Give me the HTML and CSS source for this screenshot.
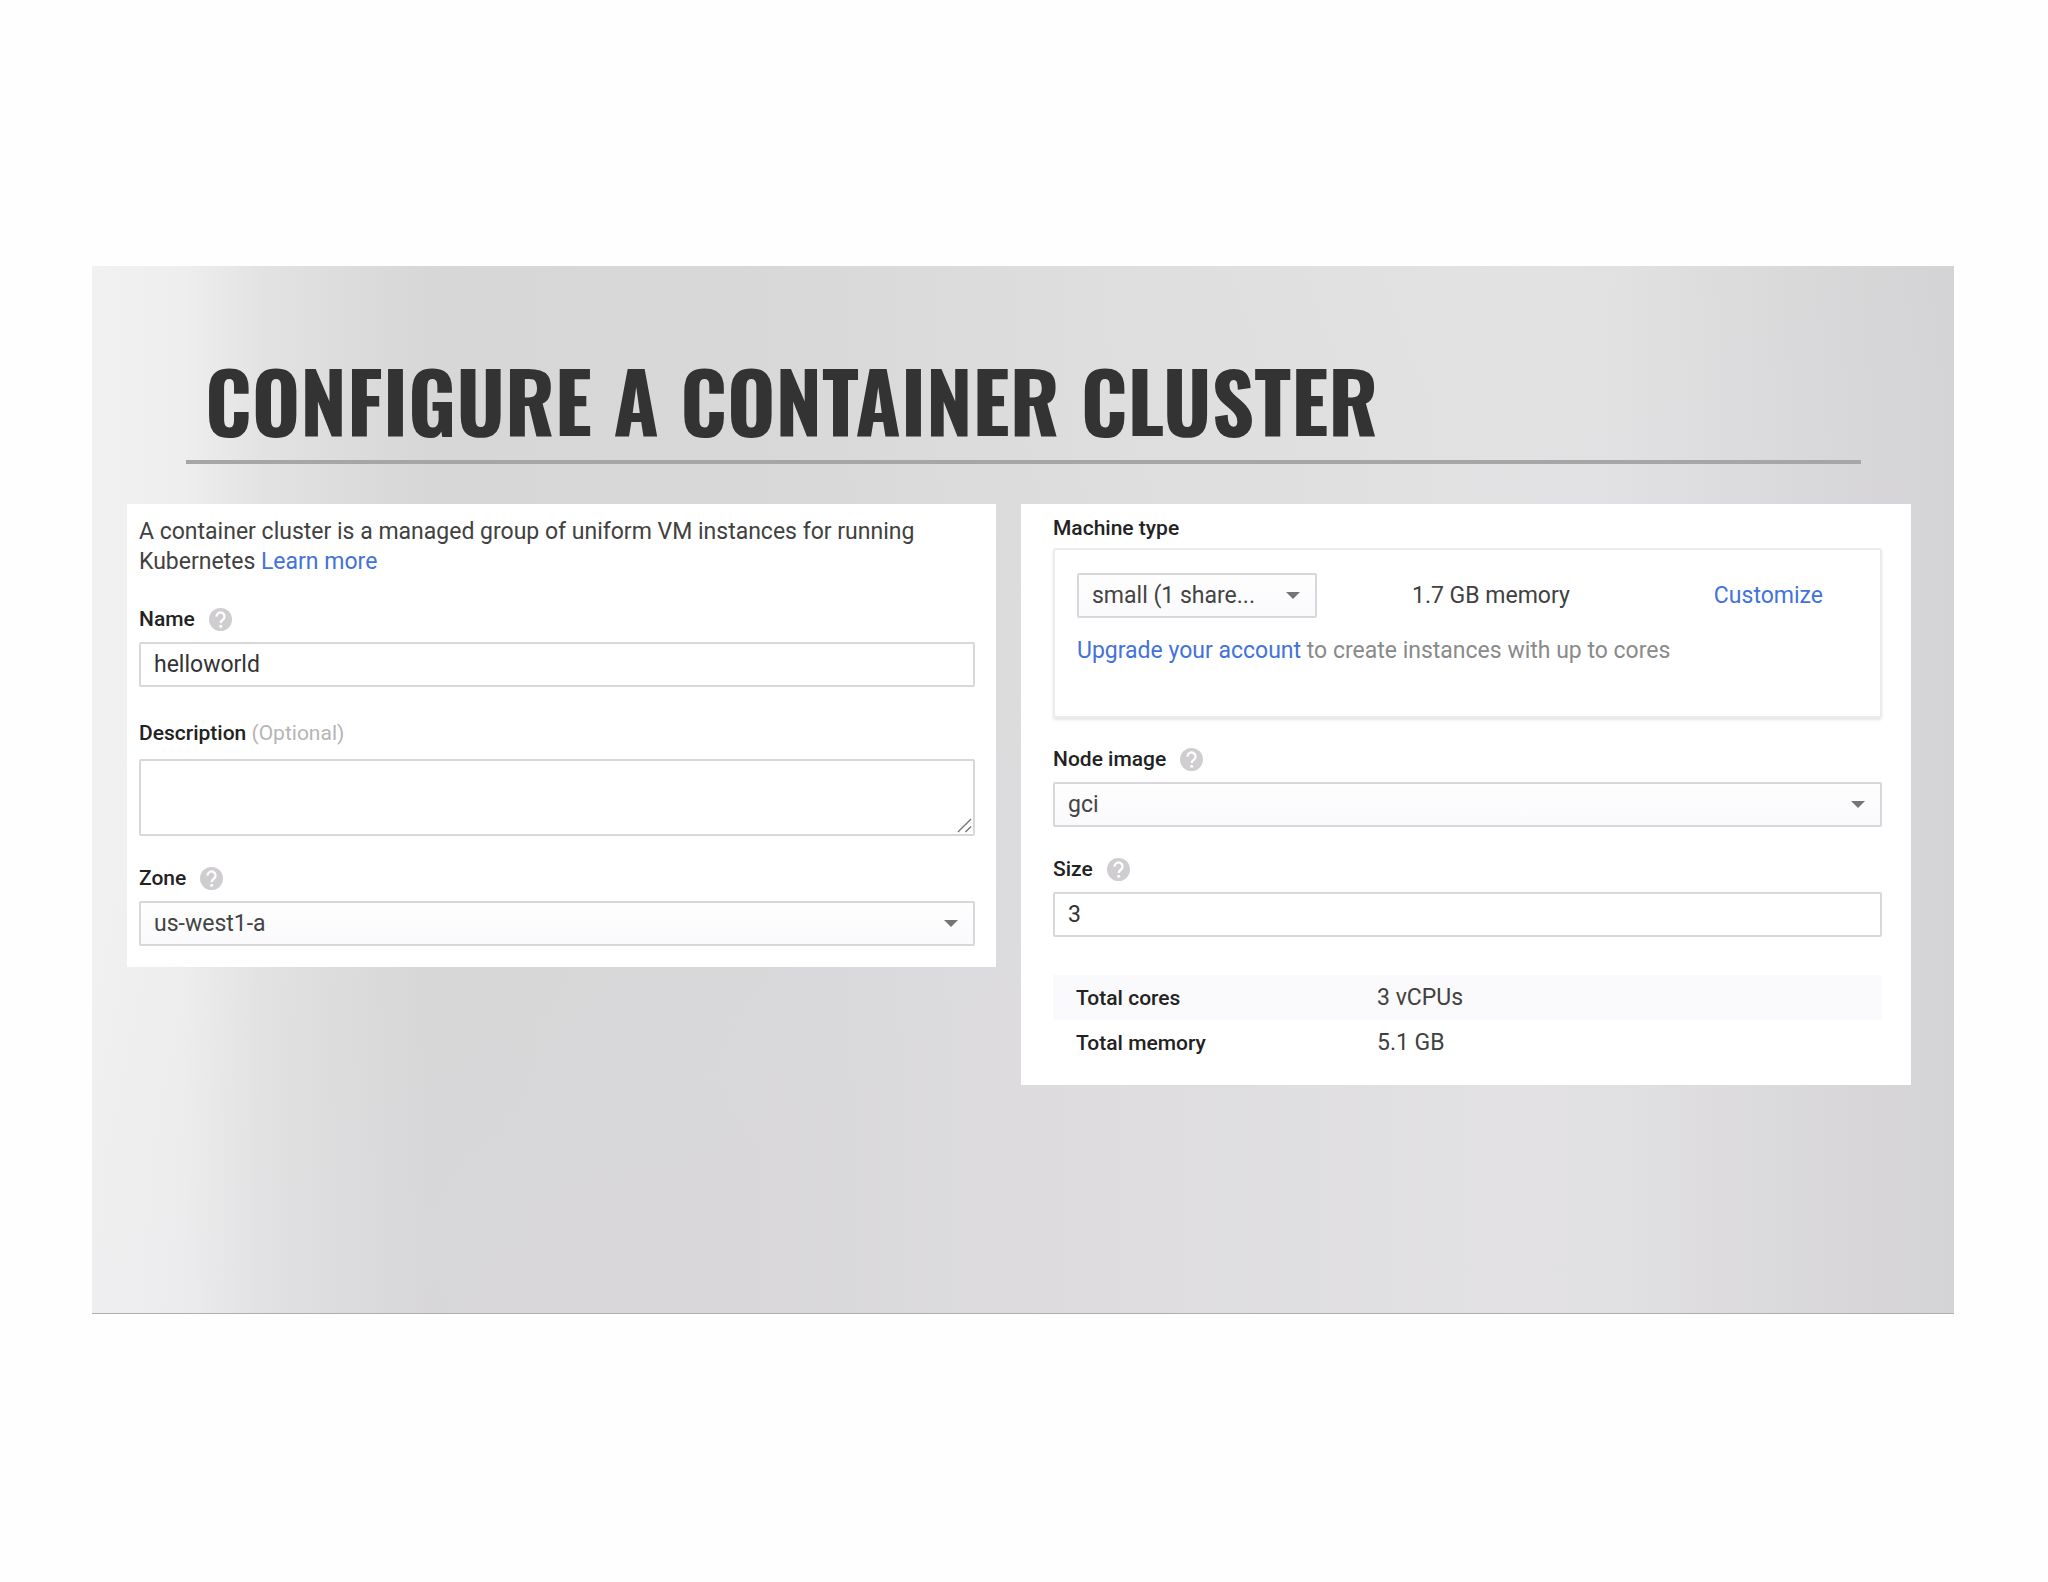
FILE: index.html
```html
<!DOCTYPE html>
<html lang="en">
<head>
    <meta charset="UTF-8">
    <meta name="viewport" content="width=device-width, initial-scale=1.0">
    <title>Configure a container cluster</title>
    <link rel="stylesheet" href="styles.css">
</head>
<body>
    <svg class="sprite" aria-hidden="true">
        <symbol id="help" viewBox="0 0 24 24">
            <circle cx="12" cy="12" r="12" fill="#cfcdd0"/>
            <path d="M7.800 9a4.200 4.200 0 1 1 6.600 3.300c-1.500 1.100-2.200 1.700-2.200 3.400" fill="none" stroke="#fff" stroke-width="2.400"/>
            <circle cx="12.200" cy="19" r="1.600" fill="#fff"/>
        </symbol>
    </svg>

    <main class="slide">
        <header class="slide-header">
            <h1>CONFIGURE A CONTAINER CLUSTER</h1>
        </header>

        <div class="panels">
            <section class="panel panel-left">
                <p class="intro">
                    <span>A container cluster is a managed group of uniform VM instances for running</span>
                    <span>Kubernetes</span>
                    <a href="#">Learn more</a>
                </p>

                <div class="field">
                    <div class="field-head">
                        <label for="name">Name</label>
                        <svg class="help"><use href="#help"/></svg>
                    </div>
                    <input class="control" type="text" id="name" value="helloworld">
                </div>

                <div class="field field-tall">
                    <div class="field-head">
                        <label for="description">Description <span class="optional">(Optional)</span></label>
                    </div>
                    <div class="area-wrap">
                        <textarea class="control area" id="description"></textarea>
                        <svg class="grip" viewBox="0 0 16 16"><path d="M1 15 15 1M9 15l6-6" stroke="#777" stroke-width="1.500"/></svg>
                    </div>
                </div>

                <div class="field">
                    <div class="field-head">
                        <label for="zone">Zone</label>
                        <svg class="help"><use href="#help"/></svg>
                    </div>
                    <div class="select-wrap">
                        <select class="control" id="zone">
                            <option>us-west1-a</option>
                        </select>
                    </div>
                </div>
            </section>

            <section class="panel panel-right">
                <div class="machine">
                    <div class="field-head">
                        <label for="machine">Machine type</label>
                    </div>
                    <div class="card">
                        <div class="card-row">
                            <div class="select-wrap">
                                <select class="control" id="machine">
                                    <option>small (1 share...</option>
                                </select>
                            </div>
                            <span class="memory">1.7 GB memory</span>
                            <a class="customize" href="#">Customize</a>
                        </div>
                        <p class="note"><a href="#">Upgrade your account</a> to create instances with up to cores</p>
                    </div>
                </div>

                <div class="field">
                    <div class="field-head">
                        <label for="image">Node image</label>
                        <svg class="help"><use href="#help"/></svg>
                    </div>
                    <div class="select-wrap">
                        <select class="control" id="image">
                            <option>gci</option>
                        </select>
                    </div>
                </div>

                <div class="field">
                    <div class="field-head">
                        <label for="size">Size</label>
                        <svg class="help"><use href="#help"/></svg>
                    </div>
                    <input class="control" type="text" id="size" value="3">
                </div>

                <table class="totals">
                    <tr>
                        <th scope="row">Total cores</th>
                        <td>3 vCPUs</td>
                    </tr>
                    <tr>
                        <th scope="row">Total memory</th>
                        <td>5.1 GB</td>
                    </tr>
                </table>
            </section>
        </div>
    </main>
</body>
</html>
```
FILE: styles.css
```css
* {
    margin: 0;
    padding: 0;
    box-sizing: border-box;
}

body {
    min-height: 100vh;
    display: flex;
    align-items: center;
    padding: 0 94px 2px 92px;
    background: #fefefe;
    color: #414141;
    font-family: Roboto, sans-serif;
    font-size: 23px;
    line-height: 30px;
}

a {
    color: #4272db;
    text-decoration: none;
}

.sprite {
    position: absolute;
    width: 0;
    height: 0;
}

.slide {
    flex: 1;
    aspect-ratio: 16 / 9;
    padding-top: 84px;
    border-bottom: 1px solid #b0aeb1;
    background:
        linear-gradient(to bottom right, rgba(220, 210, 226, 0) 30%, rgba(220, 210, 226, 0.15) 60%),
        linear-gradient(to right, #f1f1f1 0%, #eeeeee 5%, #e3e3e3 9%, #dddddd 13%, #d7d7d7 18%, #d8d8d8 36%, #dedede 54%, #e3e3e3 76%, #e2e2e2 82%, #d8d8d8 93%, #d3d3d3 100%);
}

.slide-header {
    margin: 0 93px 40px 94px;
    padding: 0 19px 10px;
    border-bottom: 4px solid #a6a6a6;
}

h1 {
    color: #333;
    font-family: Oswald, "Roboto Condensed", "Liberation Sans Narrow", sans-serif;
    font-size: 83px;
    font-weight: 700;
    line-height: 100px;
}

.panels {
    display: grid;
    grid-template-columns: 869fr 890fr;
    align-items: start;
    gap: 25px;
    padding: 0 43px 0 35px;
}

.panel {
    background: #fff;
}

.panel-left {
    padding: 13px 21px 21px 12px;
}

.panel-right {
    padding: 9px 29px 20px 32px;
}

.intro {
    margin-bottom: 27px;
}

.field {
    margin-bottom: 27px;
}

.field-tall {
    padding-top: 4px;
}

.field-tall .field-head {
    margin-bottom: 11px;
}

.panel-left .field:last-child {
    margin-bottom: 0;
}

.field-head {
    display: flex;
    align-items: center;
    gap: 14px;
    margin-bottom: 8px;
}

label,
th {
    color: #222;
    font-size: 21px;
    font-weight: 500;
}

.optional {
    color: #b5b5b5;
    font-weight: 400;
}

.help {
    width: 23px;
    height: 23px;
}

.control {
    display: block;
    width: 100%;
    height: 45px;
    padding: 0 13px;
    border: 2px solid #d9d7db;
    border-radius: 2px;
    background: #fff;
    color: #333;
    font: inherit;
}

.area {
    height: 77px;
    resize: none;
}

.area-wrap,
.select-wrap {
    position: relative;
}

.grip {
    position: absolute;
    right: 3px;
    bottom: 3px;
    width: 15px;
    height: 15px;
}

select.control {
    appearance: none;
    background: linear-gradient(to bottom, #fefefe, #faf9fc);
    color: #444;
}

.select-wrap::after {
    content: '';
    position: absolute;
    right: 17px;
    top: 19px;
    border: 7px solid transparent;
    border-top-color: #757575;
    border-bottom: 0;
    pointer-events: none;
}

.machine {
    margin-bottom: 26px;
}

.machine .field-head {
    margin-bottom: 5px;
}

.card {
    padding: 23px 57px 50px 22px;
    border: 2px solid #eceaed;
    border-radius: 3px;
    box-shadow: 0 2px 3px rgba(0, 0, 0, 0.1);
}

.card-row {
    display: grid;
    grid-template-columns: 240px 1fr auto;
    align-items: center;
    margin-bottom: 18px;
}

.memory {
    padding-left: 95px;
}

.note {
    color: #8a8a8a;
}

.totals {
    width: 100%;
    margin-top: 38px;
    border-collapse: collapse;
}

.totals tr:first-child {
    background: #faf9fc;
}

.totals th,
.totals td {
    height: 45px;
    text-align: left;
}

.totals th {
    width: 324px;
    padding-left: 23px;
}
```
